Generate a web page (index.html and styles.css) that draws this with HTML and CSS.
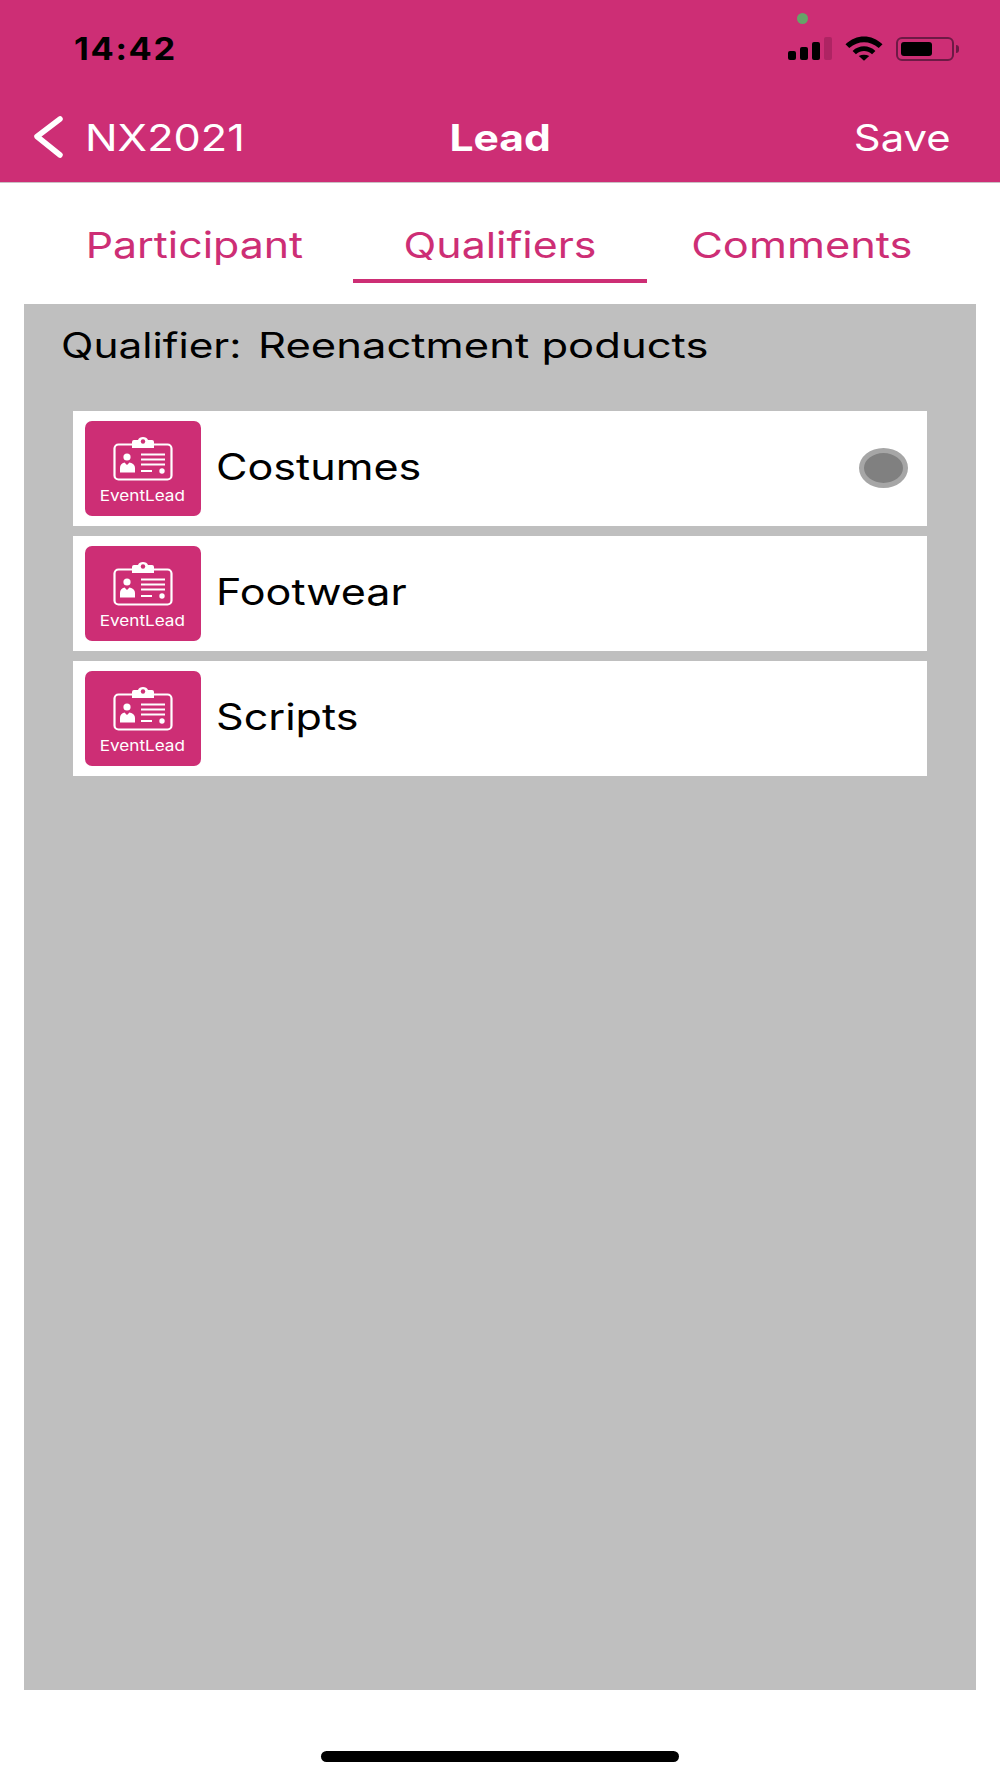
FILE: index.html
```html
<!DOCTYPE html>
<html lang="en">
<head>
    <meta charset="UTF-8">
    <title>Lead</title>
    <link rel="stylesheet" href="styles.css">
</head>
<body>
    <div class="page">
        <header class="top">
            <div class="status">
                <span class="time">14:42</span>
                <span class="camera-dot"></span>
                <div class="status-icons">
                    <div class="signal">
                        <span class="bar bar1"></span>
                        <span class="bar bar2"></span>
                        <span class="bar bar3"></span>
                        <span class="bar bar4"></span>
                    </div>
                    <svg class="wifi" width="38" height="25" viewBox="0 0 40 26">
                        <path d="M0.500 8.500 C12 -2.500 28 -2.500 39.500 8.500 L35.500 12.500 C26 4.500 14 4.500 4.500 12.500 Z" fill="#000"/>
                        <path d="M8 15.500 C15 9 25 9 32 15.500 L28.500 19 C23 14.500 17 14.500 11.500 19 Z" fill="#000"/>
                        <path d="M14.500 21 C18 19 22 19 25.500 21 L20 26 Z" fill="#000"/>
                    </svg>
                    <div class="battery">
                        <div class="battery-body"><span class="battery-level"></span></div>
                        <span class="battery-tip"></span>
                    </div>
                </div>
            </div>
            <nav class="nav">
                <div class="nav-back">
                    <svg width="32" height="44" viewBox="0 0 32 44">
                        <path d="M28 4 L5 21.500 L28 40" fill="none" stroke="#fff" stroke-width="5.500" stroke-linecap="round" stroke-linejoin="round"/>
                    </svg>
                    <span class="nav-back-label">NX2021</span>
                </div>
                <div class="nav-title">Lead</div>
                <div class="nav-save"><span class="nav-save-label">Save</span></div>
            </nav>
        </header>

        <div class="tabs">
            <div class="tab tab-first"><span class="tab-label">Participant</span></div>
            <div class="tab tab-active"><span class="tab-label">Qualifiers</span></div>
            <div class="tab tab-last"><span class="tab-label">Comments</span></div>
        </div>

        <main class="panel">
            <div class="qualifier">
                <span class="qualifier-label">Qualifier:</span>
                <span class="qualifier-name">Reenactment poducts</span>
            </div>
            <ul class="options">
                <li class="option">
                    <div class="logo">
                        <svg width="116" height="66" viewBox="0 0 116 66"><use href="#badge"/></svg>
                        <span class="logo-name">EventLead</span>
                    </div>
                    <span class="option-name">Costumes</span>
                    <span class="radio"></span>
                </li>
                <li class="option">
                    <div class="logo">
                        <svg width="116" height="66" viewBox="0 0 116 66"><use href="#badge"/></svg>
                        <span class="logo-name">EventLead</span>
                    </div>
                    <span class="option-name">Footwear</span>
                </li>
                <li class="option">
                    <div class="logo">
                        <svg width="116" height="66" viewBox="0 0 116 66"><use href="#badge"/></svg>
                        <span class="logo-name">EventLead</span>
                    </div>
                    <span class="option-name">Scripts</span>
                </li>
            </ul>
        </main>

        <footer class="bottom"><span class="home-bar"></span></footer>
    </div>

    <svg class="defs" width="0" height="0">
        <symbol id="badge" viewBox="0 0 116 66">
            <rect x="29.500" y="23.500" width="57" height="35" rx="4" fill="none" stroke="#fff" stroke-width="2.200"/>
            <path d="M47 27 V21 Q47 19 49 19 H53 C54 15 62 15 63 19 H67 Q69 19 69 21 V27 Z" fill="#fff"/>
            <circle cx="58" cy="20.500" r="2.200" fill="#cd2e75"/>
            <circle cx="42" cy="36" r="3.600" fill="#fff"/>
            <path d="M35 51.500 V47 Q35 42.500 39.500 41.500 L42 44 L44.500 41.500 Q50 42.500 50 47 V51.500 Z" fill="#fff"/>
            <path d="M56 33.500 H80 M56 38.500 H80 M56 43.500 H80 M56 50 H67" fill="none" stroke="#fff" stroke-width="2"/>
            <circle cx="77" cy="50" r="2.700" fill="#fff"/>
        </symbol>
    </svg>
</body>
</html>
```

FILE: styles.css
```css
* {
    box-sizing: border-box;
}

body {
    margin: 0;
    background-color: #fff;
    font-family: Inter, "Liberation Sans", sans-serif;
    color: #000;
}

.page {
    display: flex;
    flex-direction: column;
    height: 1778px;
}

.top {
    height: 183px;
    background-color: #cd2e75;
    border-bottom: 1px solid #c9c0c4;
    color: #fff;
}

.status {
    position: relative;
    display: flex;
    justify-content: space-between;
    align-items: center;
    height: 97px;
    padding: 0 41px 0 74px;
}

.time {
    font-size: 31px;
    font-weight: 700;
    letter-spacing: 1.500px;
    color: #000;
    transform: scaleX(1.11);
    transform-origin: left center;
}

.camera-dot {
    position: absolute;
    left: 797px;
    top: 13px;
    width: 11px;
    height: 11px;
    border-radius: 50%;
    background-color: #66a468;
}

.status-icons {
    display: flex;
    align-items: center;
    gap: 13px;
}

.signal {
    display: flex;
    align-items: flex-end;
    gap: 4px;
    height: 23px;
}

.bar {
    width: 8px;
    border-radius: 2px;
    background-color: #000;
}

.bar1 { height: 9px; }
.bar2 { height: 13px; }
.bar3 { height: 18px; }
.bar4 { height: 23px; background-color: #ae2463; }

.battery {
    display: flex;
    align-items: center;
    gap: 2px;
}

.battery-body {
    width: 58px;
    height: 24px;
    padding: 3px 3px;
    border: 2px solid #6d1a45;
    border-radius: 6px;
}

.battery-level {
    display: block;
    width: 31px;
    height: 100%;
    border-radius: 3px;
    background-color: #000;
}

.battery-tip {
    width: 3px;
    height: 8px;
    border-radius: 0 3px 3px 0;
    background-color: #6d1a45;
}

.nav {
    display: grid;
    grid-template-columns: 1fr auto 1fr;
    align-items: center;
    height: 80px;
    padding: 0 32px;
    font-size: 37px;
}

.nav-back {
    display: flex;
    align-items: center;
    gap: 21px;
}

.nav-back-label {
    transform: scaleX(1.17);
    transform-origin: left center;
}

.nav-title {
    font-weight: 700;
    transform: scaleX(1.15);
}

.nav-save {
    padding-right: 17px;
    text-align: right;
}

.nav-save-label {
    display: inline-block;
    transform: scaleX(1.13);
    transform-origin: right center;
}

.tabs {
    display: flex;
    height: 121px;
    padding: 0 24px;
    color: #cd2e75;
    font-size: 36px;
}

.tab {
    display: flex;
    justify-content: center;
    align-items: center;
    width: 294px;
    height: 100px;
    padding-top: 28px;
    border-bottom: 4px solid transparent;
}

.tab-first {
    width: 329px;
    padding-left: 12px;
}

.tab-last {
    padding-left: 16px;
}

.tab-label {
    transform: scaleX(1.19);
}

.tab-last .tab-label {
    transform: scaleX(1.205);
}

.tab-active {
    border-bottom-color: #cd2e75;
}

.panel {
    flex: 1;
    margin: 0 24px;
    padding: 16px 49px 0 38px;
    background-color: #bfbfbf;
}

.qualifier {
    display: flex;
    gap: 48px;
    font-size: 35px;
    line-height: 50px;
}

.qualifier-label,
.qualifier-name {
    transform-origin: left center;
}

.qualifier-label {
    margin-left: -1px;
    transform: scaleX(1.21);
}

.qualifier-name {
    transform: scaleX(1.245);
}

.options {
    list-style-type: none;
    margin: 41px 0 0;
    padding: 0 0 0 11px;
    display: flex;
    flex-direction: column;
    gap: 10.500px;
}

.option {
    display: flex;
    align-items: center;
    height: 114.500px;
    padding: 0 19px 0 12px;
    background-color: #fff;
}

.logo {
    display: flex;
    flex-direction: column;
    align-items: center;
    width: 116px;
    height: 95px;
    border-radius: 7px;
    background-color: #cd2e75;
    color: #fff;
    font-size: 15px;
    line-height: 17px;
}

.logo-name {
    margin-left: -2px;
    transform: scaleX(1.14);
}

.option-name {
    margin-left: 15px;
    padding-bottom: 4px;
    font-size: 37px;
    transform: scaleX(1.165);
    transform-origin: left center;
}

.radio {
    width: 49px;
    height: 40px;
    margin-left: auto;
    border: 5px solid #a6a6a6;
    border-radius: 50%;
    background-color: #808080;
}

.bottom {
    display: flex;
    justify-content: center;
    align-items: flex-start;
    height: 88px;
    padding-top: 61px;
}

.home-bar {
    width: 358px;
    height: 11px;
    border-radius: 6px;
    background-color: #000;
}

.defs {
    position: absolute;
}
```
